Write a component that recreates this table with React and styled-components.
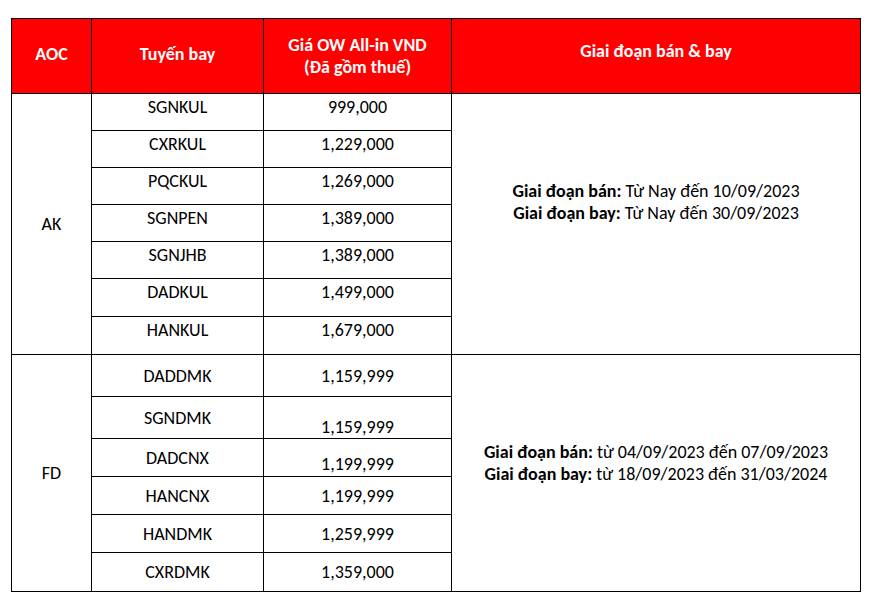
import React from 'react';
import styled, { createGlobalStyle } from 'styled-components';

const GlobalStyle = createGlobalStyle`
  html, body {
    margin: 0;
    padding: 0;
    background: #ffffff;
  }
  body {
    font-family: Carlito, "Open Sans", "Noto Sans", sans-serif;
    color: #000;
  }
`;

const Page = styled.div`
  padding: 18px 0 0 11px;
`;

const Table = styled.table`
  border-collapse: collapse;
  table-layout: fixed;
  width: 849px;
  font-size: 18px;
  line-height: 22px;
`;

const HeadCell = styled.th`
  background: #ff0000;
  color: #ffffff;
  font-weight: 700;
  border: 1px solid #000;
  height: 75px;
  padding: 0 0 ${(p) => p.$lift || 0}px;
  text-align: center;
  vertical-align: middle;
  box-sizing: border-box;
`;

const Cell = styled.td`
  border: 1px solid #000;
  text-align: center;
  padding: ${(p) => p.$pt || 0}px 0 ${(p) => p.$pb || 0}px;
  vertical-align: ${(p) => p.$valign || 'middle'};
  height: ${(p) => p.$h}px;
  box-sizing: border-box;
  white-space: nowrap;
`;

const Period = styled.div`
  line-height: 22px;
`;

const Label = styled.b`
  font-weight: 700;
`;

const akRows = [
  ['SGNKUL', '999,000', 37],
  ['CXRKUL', '1,229,000', 37],
  ['PQCKUL', '1,269,000', 37],
  ['SGNPEN', '1,389,000', 37],
  ['SGNJHB', '1,389,000', 37],
  ['DADKUL', '1,499,000', 38],
  ['HANKUL', '1,679,000', 38],
];

const fdRows = [
  { route: 'DADDMK', price: '1,159,999', h: 42 },
  { route: 'SGNDMK', price: '1,159,999', h: 42, priceAlign: 'bottom', pb: 0 },
  { route: 'DADCNX', price: '1,199,999', h: 38, priceAlign: 'bottom', pb: 1 },
  { route: 'HANCNX', price: '1,199,999', h: 38 },
  { route: 'HANDMK', price: '1,259,999', h: 38 },
  { route: 'CXRDMK', price: '1,359,000', h: 39 },
];

export default function App() {
  return (
    <Page>
      <GlobalStyle />
      <Table>
        <colgroup>
          <col style={{ width: 80 }} />
          <col style={{ width: 172 }} />
          <col style={{ width: 188 }} />
          <col style={{ width: 409 }} />
        </colgroup>
        <thead>
          <tr>
            <HeadCell $lift={4}>AOC</HeadCell>
            <HeadCell $lift={4}>Tuyến bay</HeadCell>
            <HeadCell>
              Giá OW All-in VND
              <br />
              (Đã gồm thuế)
            </HeadCell>
            <HeadCell $lift={10}>Giai đoạn bán &amp; bay</HeadCell>
          </tr>
        </thead>
        <tbody>
          {akRows.map(([route, price, h], i) => (
            <tr key={route}>
              {i === 0 && <Cell rowSpan={7}>AK</Cell>}
              <Cell $h={h} $valign="top" $pt={2}>{route}</Cell>
              <Cell $h={h} $valign="top" $pt={2}>{price}</Cell>
              {i === 0 && (
                <Cell rowSpan={7} $pb={44}>
                  <Period><Label>Giai đoạn bán:</Label> Từ Nay đến 10/09/2023</Period>
                  <Period><Label>Giai đoạn bay:</Label> Từ Nay đến 30/09/2023</Period>
                </Cell>
              )}
            </tr>
          ))}
          {fdRows.map((r, i) => (
            <tr key={r.route}>
              {i === 0 && <Cell rowSpan={6}>FD</Cell>}
              <Cell $h={r.h}>{r.route}</Cell>
              <Cell $h={r.h} $valign={r.priceAlign} $pb={r.pb}>{r.price}</Cell>
              {i === 0 && (
                <Cell rowSpan={6} $pb={20}>
                  <Period><Label>Giai đoạn bán:</Label> từ 04/09/2023 đến 07/09/2023</Period>
                  <Period><Label>Giai đoạn bay:</Label> từ 18/09/2023 đến 31/03/2024</Period>
                </Cell>
              )}
            </tr>
          ))}
        </tbody>
      </Table>
    </Page>
  );
}
